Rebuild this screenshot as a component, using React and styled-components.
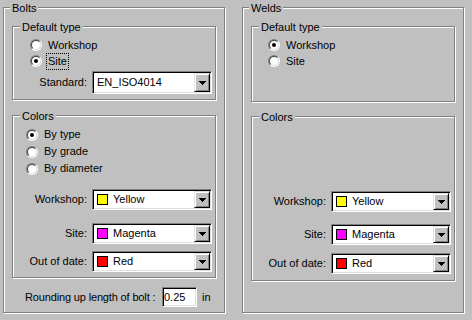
import React from 'react';
import styled, { createGlobalStyle, css } from 'styled-components';

const GlobalStyle = createGlobalStyle`
  html, body {
    margin: 0;
    padding: 0;
    background: #c0c0c0;
  }
  body {
    font-family: 'Liberation Sans', Arial, sans-serif;
    font-size: 11px;
    color: #000;
  }
`;

// classic etched frame: gray line with a white line just inside/outside
const etched = css`
  border: 1px solid #808080;
  box-shadow: inset 1px 1px 0 #fff, 1px 1px 0 #fff;
`;

// classic sunken field
const sunken = css`
  border: 1px solid;
  border-color: #808080 #fff #fff #808080;
  box-shadow: inset 1px 1px 0 #000, inset -1px -1px 0 #dfdfdf;
  background: #fff;
`;

const Dialog = styled.div`
  width: 472px;
  height: 320px;
  box-sizing: border-box;
  padding: 7px 0 0 3px;
  display: flex;
  align-items: flex-start;
  gap: 17px;
  background: #c0c0c0;
`;

const Panel = styled.div`
  ${etched}
  position: relative;
  width: 222px;
  height: 306px;
  box-sizing: border-box;
  padding: 18px 8px 0;
  display: flex;
  flex-direction: column;
`;

const Group = styled.div`
  ${etched}
  position: relative;
  box-sizing: border-box;
  height: ${(p) => p.$h}px;
  margin-top: ${(p) => p.$mt || 0}px;
  padding-top: ${(p) => p.$pt}px;
  display: flex;
  flex-direction: column;
`;

const Legend = styled.span`
  position: absolute;
  top: -6px;
  left: ${(p) => p.$x}px;
  padding: 0 2px;
  line-height: 13px;
  background: #c0c0c0;
  white-space: nowrap;
`;

const RadioRow = styled.div`
  display: flex;
  align-items: center;
  height: ${(p) => p.$h}px;
  padding-left: ${(p) => p.$indent}px;
`;

const RadioOuter = styled.span`
  flex: none;
  width: 12px;
  height: 12px;
  box-sizing: border-box;
  border-radius: 50%;
  border: 1px solid;
  border-color: #808080 #fff #fff #808080;
  display: flex;
  align-items: center;
  justify-content: center;
`;

const RadioInner = styled.span`
  width: 10px;
  height: 10px;
  box-sizing: border-box;
  border-radius: 50%;
  border: 1px solid;
  border-color: #404040 #dfdfdf #dfdfdf #404040;
  background: #fff;
  display: flex;
  align-items: center;
  justify-content: center;
`;

const Dot = styled.span`
  width: 4px;
  height: 4px;
  border-radius: 50%;
  background: #000;
`;

const RadioLabel = styled.span`
  margin-left: 4px;
  padding: 1px;
  line-height: 13px;
  border: 1px dotted ${(p) => (p.$focus ? '#000' : 'transparent')};
  white-space: nowrap;
`;

const FieldRow = styled.div`
  display: flex;
  align-items: center;
  margin-top: ${(p) => p.$mt || 0}px;
`;

const FieldLabel = styled.span`
  width: 74px;
  margin-right: 5px;
  text-align: right;
  white-space: nowrap;
  line-height: 13px;
`;

const Combo = styled.div`
  ${sunken}
  width: 120px;
  height: ${(p) => p.$h || 21}px;
  box-sizing: border-box;
  padding: 1px;
  display: flex;
  align-items: stretch;
`;

const ComboValue = styled.div`
  flex: 1;
  display: flex;
  align-items: center;
  padding-left: 3px;
  line-height: 13px;
  white-space: nowrap;
`;

const Swatch = styled.span`
  width: 11px;
  height: 11px;
  box-sizing: border-box;
  border: 1px solid #000;
  background: ${(p) => p.$color};
  margin-right: 5px;
  flex: none;
`;

const DropButton = styled.span`
  width: 16px;
  box-sizing: border-box;
  background: #c0c0c0;
  border: 1px solid;
  border-color: #dfdfdf #000 #000 #dfdfdf;
  box-shadow: inset 1px 1px 0 #fff, inset -1px -1px 0 #808080;
  display: flex;
  align-items: center;
  justify-content: center;
`;

const BottomRow = styled.div`
  display: flex;
  align-items: center;
  margin-top: 9px;
  padding-left: 13px;
`;

const BottomLabel = styled.span`
  width: 137px;
  white-space: nowrap;
  line-height: 13px;
  letter-spacing: -0.15px;
`;

const TextBox = styled.div`
  ${sunken}
  width: 35px;
  height: 20px;
  box-sizing: border-box;
  padding-left: 1px;
  display: flex;
  align-items: center;
  line-height: 13px;
`;

const Unit = styled.span`
  margin-left: 5px;
  line-height: 13px;
`;

const Arrow = () => (
  <svg width="7" height="4" viewBox="0 0 7 4" shapeRendering="crispEdges">
    <path d="M0 0h7v1H0zM1 1h5v1H1zM2 2h3v1H2zM3 3h1v1H3z" fill="#000" />
  </svg>
);

const Radio = ({ label, checked, focus, indent, h }) => (
  <RadioRow $indent={indent} $h={h}>
    <RadioOuter>
      <RadioInner>{checked && <Dot />}</RadioInner>
    </RadioOuter>
    <RadioLabel $focus={focus}>{label}</RadioLabel>
  </RadioRow>
);

const ComboField = ({ label, value, color, mt, h }) => (
  <FieldRow $mt={mt}>
    <FieldLabel>{label}</FieldLabel>
    <Combo $h={h}>
      <ComboValue>
        {color && <Swatch $color={color} />}
        {value}
      </ComboValue>
      <DropButton>
        <Arrow />
      </DropButton>
    </Combo>
  </FieldRow>
);

const App = () => (
  <>
    <GlobalStyle />
    <Dialog>
      <Panel>
        <Legend $x={6}>Bolts</Legend>
        <Group $h={74} $pt={10}>
          <Legend $x={7}>Default type</Legend>
          <Radio label="Workshop" indent={17} h={16} />
          <Radio label="Site" checked focus indent={17} h={16} />
          <ComboField label="Standard:" value="EN_ISO4014" mt={2} h={23} />
        </Group>
        <Group $h={163} $pt={10} $mt={15}>
          <Legend $x={7}>Colors</Legend>
          <Radio label="By type" checked indent={13} h={17} />
          <Radio label="By grade" indent={13} h={17} />
          <Radio label="By diameter" indent={13} h={17} />
          <ComboField label="Workshop:" value="Yellow" color="#ffff00" mt={12} />
          <ComboField label="Site:" value="Magenta" color="#ff00ff" mt={13} />
          <ComboField label="Out of date:" value="Red" color="#ff0000" mt={7} />
        </Group>
        <BottomRow>
          <BottomLabel>Rounding up length of bolt :</BottomLabel>
          <TextBox>0.25</TextBox>
          <Unit>in</Unit>
        </BottomRow>
      </Panel>

      <Panel>
        <Legend $x={6}>Welds</Legend>
        <Group $h={76} $pt={10}>
          <Legend $x={7}>Default type</Legend>
          <Radio label="Workshop" checked indent={16} h={16} />
          <Radio label="Site" indent={16} h={16} />
        </Group>
        <Group $h={165} $pt={74} $mt={14}>
          <Legend $x={7}>Colors</Legend>
          <ComboField label="Workshop:" value="Yellow" color="#ffff00" />
          <ComboField label="Site:" value="Magenta" color="#ff00ff" mt={12} />
          <ComboField label="Out of date:" value="Red" color="#ff0000" mt={8} />
        </Group>
      </Panel>
    </Dialog>
  </>
);

export default App;
